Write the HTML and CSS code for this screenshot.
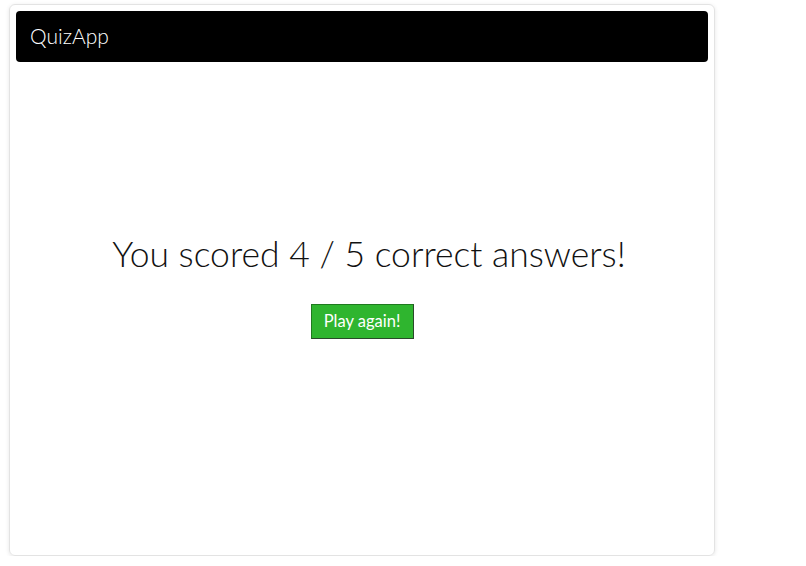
FILE: index.html
```html
<!DOCTYPE html>
<html>
<head>
<meta charset="utf-8">
<link rel="stylesheet" href="styles.css">
</head>
<body>
<div class="card">
  <header class="navbar">QuizApp</header>
  <main class="result">
    <h1 class="score">You scored 4 / 5 correct answers!</h1>
    <button class="btn-play">Play again!</button>
  </main>
</div>
</body>
</html>
```
FILE: styles.css
```css
html, body {
  margin: 0;
  padding: 0;
  background: #ffffff;
}
body {
  font-family: "Lato", "Open Sans", sans-serif;
  color: #222;
}
.card {
  box-sizing: border-box;
  margin: 4px 0 0 9px;
  width: 706px;
  height: 552px;
  border: 1px solid #e3e3e3;
  border-radius: 6px;
  box-shadow: 0 1px 4px rgba(0,0,0,0.10);
  padding: 6px;
  display: flex;
  flex-direction: column;
}
.navbar {
  background: #000;
  color: #fff;
  height: 51px;
  border-radius: 4px;
  padding: 0 14px;
  display: flex;
  align-items: center;
  font-size: 21px;
  font-weight: 300;
  padding-bottom: 2px;
  box-sizing: border-box;
}
.result {
  flex: 1;
  display: flex;
  flex-direction: column;
  align-items: center;
  padding-top: 171px;
}
.score {
  margin: 0;
  font-size: 35.5px;
  font-weight: 300;
  color: #111;
  line-height: 42px;
  padding-left: 14px;
}
.btn-play {
  margin-top: 29px;
  width: 103px;
  height: 35px;
  background: #2fb52f;
  color: #fff;
  border: 1px solid #1f7a1f;
  border-right-color: #2a4a2a;
  border-bottom-color: #2a4a2a;
  font-family: inherit;
  font-size: 16.5px;
  font-weight: 400;
  padding: 0 0 1px;
}
```
